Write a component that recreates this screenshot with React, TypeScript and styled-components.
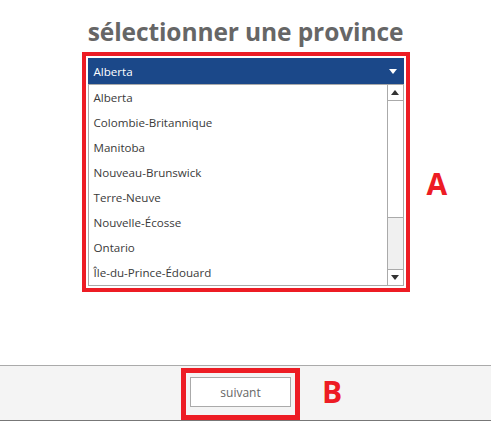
import React from "react";
import styled, { createGlobalStyle } from "styled-components";

const Global = createGlobalStyle`
  html, body { margin: 0; padding: 0; background: #fff; }
  body { width: 491px; height: 424px; overflow: hidden; font-family: "Open Sans", "Noto Sans", sans-serif; }
`;

const Page = styled.div`
  width: 491px;
  height: 424px;
  display: flex;
  flex-direction: column;
`;

const Main = styled.div`
  height: 365px;
  display: flex;
  flex-direction: column;
  align-items: center;
`;

const Title = styled.h1`
  margin: 12px 0 0 0;
  height: 40px;
  font-family: "Open Sans", sans-serif;
  font-weight: 700;
  font-size: 24.5px;
  line-height: 40px;
  color: #666;
  letter-spacing: -0.1px;
  white-space: nowrap;
`;

const Annotated = styled.div<{ $pad: number; $bw: number }>`
  position: relative;
  border: ${(p) => p.$bw}px solid #ed1c24;
  padding: ${(p) => p.$pad}px;
  display: flex;
  flex-direction: column;
`;

const Label = styled.span<{ $left: number; $top: number }>`
  position: absolute;
  left: ${(p) => p.$left}px;
  top: ${(p) => p.$top}px;
  font-family: "Open Sans", sans-serif;
  font-weight: 700;
  font-size: 30px;
  line-height: 30px;
  color: #ed1c24;
`;

const Select = styled.div`
  width: 316px;
  display: flex;
  flex-direction: column;
`;

const Header = styled.div`
  height: 26px;
  background: #1b4889;
  color: #fff;
  display: flex;
  align-items: center;
  justify-content: space-between;
  padding: 0 7px 0 6px;
  font-size: 11.6px;
`;

const List = styled.div`
  border: 1px solid #aaa;
  display: flex;
  height: 200px;
`;

const Items = styled.div`
  flex: 1;
  display: flex;
  flex-direction: column;
`;

const Item = styled.div`
  height: 25px;
  line-height: 25px;
  padding-left: 5px;
  font-size: 11.6px;
  color: #3a3a3a;
`;

const Scrollbar = styled.div`
  width: 15px;
  border-left: 1px solid #aaa;
  display: flex;
  flex-direction: column;
  background: #f0f0f0;
`;

const ArrowBox = styled.div<{ $top?: boolean }>`
  height: 15px;
  background: #fff;
  display: flex;
  align-items: center;
  justify-content: center;
  ${(p) => (p.$top ? "border-bottom: 1px solid #aaa;" : "border-top: 1px solid #aaa;")}
`;

const Thumb = styled.div`
  height: 116px;
  background: #fff;
  border-bottom: 1px solid #aaa;
`;

const Track = styled.div`
  flex: 1;
`;

const Footer = styled.div`
  border-top: 1px solid #aaa;
  border-bottom: 1px solid #777;
  background: #f4f4f4;
  display: flex;
  justify-content: center;
  padding-top: 2px;
  padding-right: 10px;
  box-sizing: border-box;
  height: 56px;
`;

const Button = styled.button`
  width: 101px;
  height: 30px;
  background: #fff;
  border: 1px solid #aaa;
  font-family: "Open Sans", sans-serif;
  font-size: 12px;
  color: #666;
  padding: 0;
  cursor: pointer;
`;

const Tri = ({ dir, color }: { dir: "up" | "down"; color: string }) => (
  <svg width="8" height="5" viewBox="0 0 8 5">
    {dir === "down" ? (
      <polygon points="0,0 8,0 4,5" fill={color} />
    ) : (
      <polygon points="0,5 8,5 4,0" fill={color} />
    )}
  </svg>
);

const provinces = [
  "Alberta",
  "Colombie-Britannique",
  "Manitoba",
  "Nouveau-Brunswick",
  "Terre-Neuve",
  "Nouvelle-Écosse",
  "Ontario",
  "Île-du-Prince-Édouard",
];

export default function App() {
  return (
    <Page>
      <Global />
      <Main>
        <Title>sélectionner une province</Title>
        <Annotated $pad={2} $bw={4}>
          <Select>
            <Header>
              <span>Alberta</span>
              <Tri dir="down" color="#fff" />
            </Header>
            <List>
              <Items>
                {provinces.map((p) => (
                  <Item key={p}>{p}</Item>
                ))}
              </Items>
              <Scrollbar>
                <ArrowBox $top>
                  <Tri dir="up" color="#333" />
                </ArrowBox>
                <Thumb />
                <Track />
                <ArrowBox>
                  <Tri dir="down" color="#333" />
                </ArrowBox>
              </Scrollbar>
            </List>
          </Select>
          <Label $left={341} $top={113}>A</Label>
        </Annotated>
      </Main>
      <Footer>
        <Annotated $pad={4} $bw={5}>
          <Button>suivant</Button>
          <Label $left={136} $top={4}>B</Label>
        </Annotated>
      </Footer>
    </Page>
  );
}
